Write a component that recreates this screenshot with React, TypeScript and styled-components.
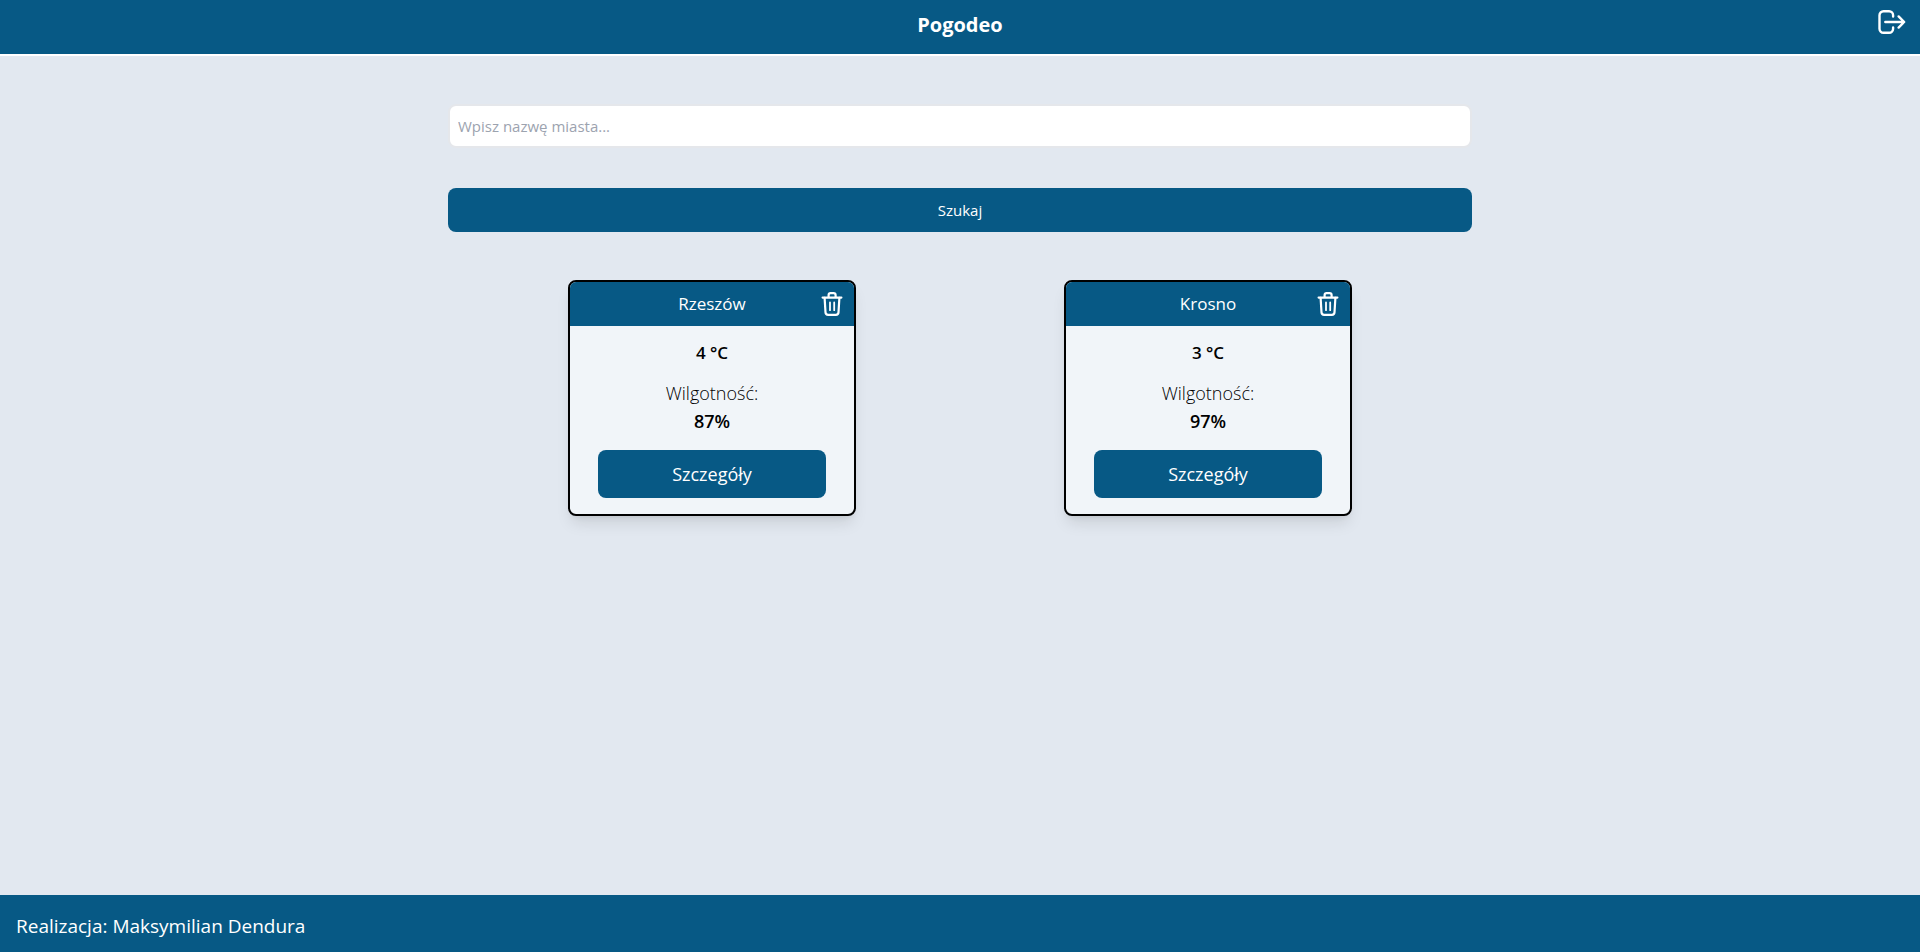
import React from "react";
import styled, { createGlobalStyle } from "styled-components";

const colors = {
  sky: "#075985",
  page: "#e2e8f0",
  card: "#f1f5f9",
};

const GlobalStyle = createGlobalStyle`
  *, *::before, *::after { box-sizing: border-box; }
  body {
    margin: 0;
    background: ${colors.page};
    color: #000;
    font-family: "Segoe UI", "Open Sans", "Noto Sans", sans-serif;
    font-size: 16px;
    line-height: 24px;
  }
  h1, h2, p { margin: 0; font-size: inherit; font-weight: inherit; }
  button, input { font: inherit; margin: 0; }
`;

const Page = styled.div`
  display: flex;
  flex-direction: column;
  min-height: 100vh;
`;

const Header = styled.header`
  display: grid;
  grid-template-columns: 1fr auto 1fr;
  align-items: start;
  padding: 6px 12px 10px;
  background: ${colors.sky};
  border-bottom: 2px solid #fff;
  color: #fff;
`;

const Title = styled.h1`
  grid-column: 2;
  font-size: 20px;
  font-weight: 700;
  line-height: 38px;
`;

const IconButton = styled.button`
  display: flex;
  justify-self: end;
  padding: 0;
  border: 0;
  background: none;
  color: #fff;
  cursor: pointer;
`;

const Icon = styled.svg<{ $size: number }>`
  width: ${({ $size }) => $size}px;
  height: ${({ $size }) => $size}px;
  fill: none;
  stroke: currentColor;
  stroke-linecap: round;
  stroke-linejoin: round;
`;

const Main = styled.main`
  flex: 1;
  display: flex;
  flex-direction: column;
  align-items: center;
  gap: 48px;
  padding: 48px 16px;
`;

const SearchForm = styled.form`
  display: flex;
  flex-direction: column;
  gap: 40px;
  width: 100%;
  max-width: 1024px;
`;

const CityInput = styled.input`
  width: 100%;
  height: 44px;
  padding: 8px;
  border: 2px solid #e5e7eb;
  border-radius: 8px;
  background: #fff;
  font-size: 15px;
  &::placeholder { color: #9ca3af; opacity: 1; }
`;

const Button = styled.button<{ $size: "medium" | "large" }>`
  width: ${({ $size }) => ($size === "large" ? "80%" : "100%")};
  padding: ${({ $size }) => ($size === "large" ? "10px" : "8px")};
  border: 0;
  border-radius: 8px;
  background: ${colors.sky};
  color: #fff;
  font-size: ${({ $size }) => ($size === "large" ? "18px" : "15px")};
  line-height: 28px;
  cursor: pointer;
`;

const CardList = styled.section`
  display: flex;
  flex-wrap: wrap;
  justify-content: space-around;
  row-gap: 32px;
  width: 100%;
  max-width: 992px;
`;

const Card = styled.article`
  width: 288px;
  overflow: hidden;
  border: 2px solid #000;
  border-radius: 8px;
  background: ${colors.card};
  box-shadow: 0 10px 15px -3px rgb(0 0 0 / 0.1), 0 4px 6px -4px rgb(0 0 0 / 0.1);
  font-size: 18px;
  line-height: 28px;
  text-align: center;
`;

const CardHeader = styled.header`
  display: grid;
  grid-template-columns: 1fr auto 1fr;
  align-items: center;
  padding: 8px 10px;
  background: ${colors.sky};
  color: #fff;
`;

const City = styled.h2`
  grid-column: 2;
  font-size: 17px;
`;

const CardBody = styled.div`
  display: flex;
  flex-direction: column;
  align-items: center;
  padding: 13px 0 16px;
`;

const Temperature = styled.p`
  font-size: 17px;
  font-weight: 600;
`;

const Humidity = styled.p`
  margin: 12px 0 15px;
  font-weight: 300;
`;

const HumidityValue = styled.strong`
  display: block;
  font-weight: 600;
`;

const Footer = styled.footer`
  padding: 17px 16px 12px;
  background: ${colors.sky};
  color: #fff;
  font-size: 19px;
  line-height: 28px;
`;

const cities = [
  { name: "Rzeszów", temperature: 4, humidity: 87 },
  { name: "Krosno", temperature: 3, humidity: 97 },
];

const LogoutIcon = () => (
  <Icon $size={32} viewBox="0 0 32 32" strokeWidth="2.4" aria-hidden="true">
    <path d="M17.1 10.6V9.2a4 4 0 0 0-4-4H7.5a4 4 0 0 0-4 4v13.6a4 4 0 0 0 4 4h5.6a4 4 0 0 0 4-4v-1.4" />
    <path d="M9.3 16H28M22.6 10.4 28.2 16l-5.6 5.6" />
  </Icon>
);

const TrashIcon = () => (
  <Icon $size={24} viewBox="0 0 24 24" strokeWidth="2.2" aria-hidden="true">
    <path d="M2.6 5.6h18.8M8.6 5.4V3.1a2 2 0 0 1 2-2h3a2 2 0 0 1 2 2v2.3" />
    <path d="m4.6 5.8.9 14.6a2.6 2.6 0 0 0 2.6 2.4h7.8a2.6 2.6 0 0 0 2.6-2.4l.9-14.6" />
    <path d="M10 10.4v7.8M14.2 10.4v7.8" strokeWidth="1.8" />
  </Icon>
);

export default function App() {
  return (
    <Page>
      <GlobalStyle />
      <Header>
        <Title>Pogodeo</Title>
        <IconButton type="button" aria-label="Wyloguj">
          <LogoutIcon />
        </IconButton>
      </Header>
      <Main>
        <SearchForm onSubmit={(event) => event.preventDefault()}>
          <CityInput type="text" aria-label="Nazwa miasta" placeholder="Wpisz nazwę miasta..." />
          <Button $size="medium" type="submit">Szukaj</Button>
        </SearchForm>
        <CardList>
          {cities.map((city) => (
            <Card key={city.name}>
              <CardHeader>
                <City>{city.name}</City>
                <IconButton type="button" aria-label={`Usuń ${city.name}`}>
                  <TrashIcon />
                </IconButton>
              </CardHeader>
              <CardBody>
                <Temperature>{city.temperature} °C</Temperature>
                <Humidity>
                  Wilgotność:
                  <HumidityValue>{city.humidity}%</HumidityValue>
                </Humidity>
                <Button $size="large" type="button">Szczegóły</Button>
              </CardBody>
            </Card>
          ))}
        </CardList>
      </Main>
      <Footer>
        <p>Realizacja: Maksymilian Dendura</p>
      </Footer>
    </Page>
  );
}
